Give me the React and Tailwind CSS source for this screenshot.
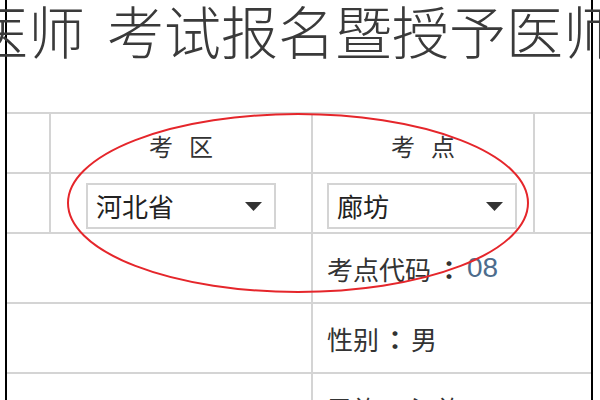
import React from "react";

const cjk = { fontFamily: '"Noto Sans CJK SC", "Noto Sans", sans-serif' };

const Select = ({ value, className = "" }) => (
  <div
    className={`flex items-center justify-between w-[190px] h-[46px] border-2 border-[#d4d4d4] bg-white pl-[8px] pr-[12px] ${className}`}
  >
    <span className="text-[26px] leading-none text-[#222]">{value}</span>
    <svg width="17" height="9" viewBox="0 0 17 9">
      <polygon points="0,0 17,0 8.5,9" fill="#333" />
    </svg>
  </div>
);

// centred full-width colon (JP glyph sits in the middle of its box)
const Colon = ({ w }) => (
  <span
    className={`inline-block text-center font-bold ${w}`}
    style={{ fontFamily: '"Noto Sans CJK JP", sans-serif' }}
  >
    ：
  </span>
);

export default function App() {
  return (
    <div className="relative w-[600px] h-[400px] overflow-hidden bg-white" style={cjk}>
      <div className="ml-[5px] w-[588px] h-full border-x-2 border-black">
        {/* title, cut off on both sides */}
        <div className="h-[112px] pt-[1px]">
          <div className="ml-[-36px] whitespace-nowrap text-[57px] leading-none font-light text-[#3a3a3a]">
            <span>医师</span>
            <span className="ml-[22px]">考试报名暨授予医师资格</span>
          </div>
        </div>

        {/* header row */}
        <div className="flex h-[60px] border-t-2 border-[#d4d4d4]">
          <div className="w-[42px]" />
          <div className="w-[262px] border-l-2 border-[#d4d4d4] flex items-center justify-center gap-[16px] pt-[6px] text-[24px] text-[#333]">
            <span>考</span>
            <span>区</span>
          </div>
          <div className="w-[222px] border-l-2 border-[#d4d4d4] flex items-center justify-center gap-[16px] pt-[6px] text-[24px] text-[#333]">
            <span>考</span>
            <span>点</span>
          </div>
          <div className="flex-1 border-l-2 border-[#d4d4d4]" />
        </div>

        {/* select row */}
        <div className="flex h-[60px] border-t-2 border-[#d4d4d4]">
          <div className="w-[42px]" />
          <div className="w-[262px] border-l-2 border-[#d4d4d4] pt-[9px] pl-[35px]">
            <Select value="河北省" />
          </div>
          <div className="w-[222px] border-l-2 border-[#d4d4d4] pt-[9px] pl-[14px]">
            <Select value="廊坊" />
          </div>
          <div className="flex-1 border-l-2 border-[#d4d4d4]" />
        </div>

        <div className="flex h-[70px] border-t-2 border-[#d4d4d4]">
          <div className="w-[304px]" />
          <div className="flex-1 border-l-2 border-[#d4d4d4] flex items-center pl-[14px] text-[26px] text-[#333]">
            <span>考点代码</span>
            <Colon w="w-[36px]" />
            <span className="text-[28px] text-[#4d6c8c]" style={{ fontFamily: '"Liberation Sans", sans-serif' }}>08</span>
          </div>
        </div>

        <div className="flex h-[70px] border-t-2 border-[#d4d4d4]">
          <div className="w-[304px]" />
          <div className="flex-1 border-l-2 border-[#d4d4d4] flex items-center pl-[14px] text-[26px] text-[#333]">
            <span>性别</span>
            <Colon w="w-[32px]" />
            <span>男</span>
          </div>
        </div>

        <div className="flex h-[70px] border-t-2 border-[#d4d4d4]">
          <div className="w-[304px]" />
          <div className="flex-1 border-l-2 border-[#d4d4d4] flex items-center pl-[14px] text-[26px] text-[#333]">
            <span>民族</span>
            <Colon w="w-[32px]" />
            <span>汉族</span>
          </div>
        </div>
      </div>

      {/* red annotation ellipse */}
      <svg className="absolute left-0 top-0 pointer-events-none" width="600" height="400">
        <ellipse cx="298" cy="203" rx="230" ry="89" fill="none" stroke="#e5262b" strokeWidth="2" />
      </svg>
    </div>
  );
}
